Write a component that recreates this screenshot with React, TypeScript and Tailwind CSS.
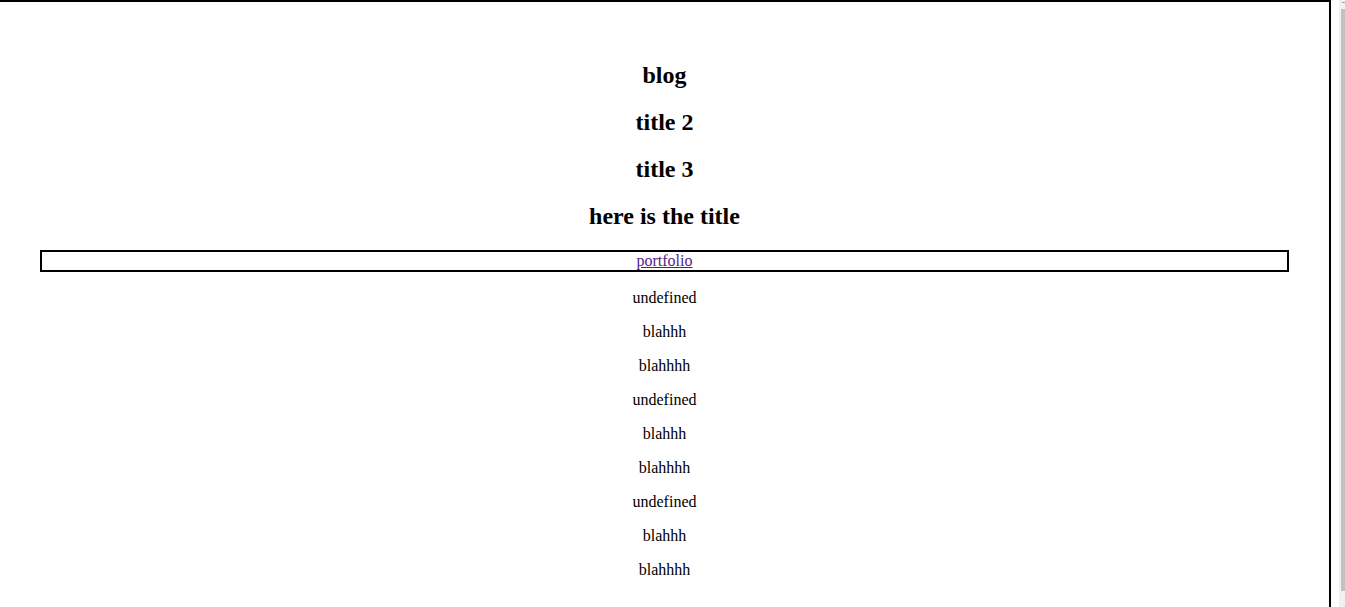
const titles = ["blog", "title 2", "title 3", "here is the title"];
const items = ["undefined", "blahhh", "blahhhh", "undefined", "blahhh", "blahhhh", "undefined", "blahhh", "blahhhh"];

export default function App() {
  return (
    <div className="flex h-[607px] overflow-hidden bg-white text-black font-['Liberation_Serif','Times_New_Roman',serif]">
      <div className="w-[1331px] shrink-0 border-t-2 border-r-2 border-black pt-[40px] text-center">
        {titles.map((t) => (
          <h2 key={t} className="my-[20px] text-[24px] font-bold leading-[27px]">
            {t}
          </h2>
        ))}
        <div className="mx-[40px] border-2 border-black text-[16px] leading-[18px]">
          <a href="#" className="text-[#551a8b] underline">
            portfolio
          </a>
        </div>
        <div className="pt-px">
          {items.map((it, i) => (
            <p key={i} className="my-[16px] text-[16px] leading-[18px]">
              {it}
            </p>
          ))}
        </div>
      </div>
      <div className="w-[8px] shrink-0" />
      {/* fake scrollbar */}
      <div className="flex w-[6px] shrink-0 flex-col bg-[#f1f1f1]">
        <div className="h-[9px] flex justify-end">
          <div className="mt-[2px] h-px w-[3px] bg-[#a3a3a3]" />
        </div>
        <div className="ml-[2px] h-[582px] bg-[#c1c1c1]" />
      </div>
    </div>
  );
}
